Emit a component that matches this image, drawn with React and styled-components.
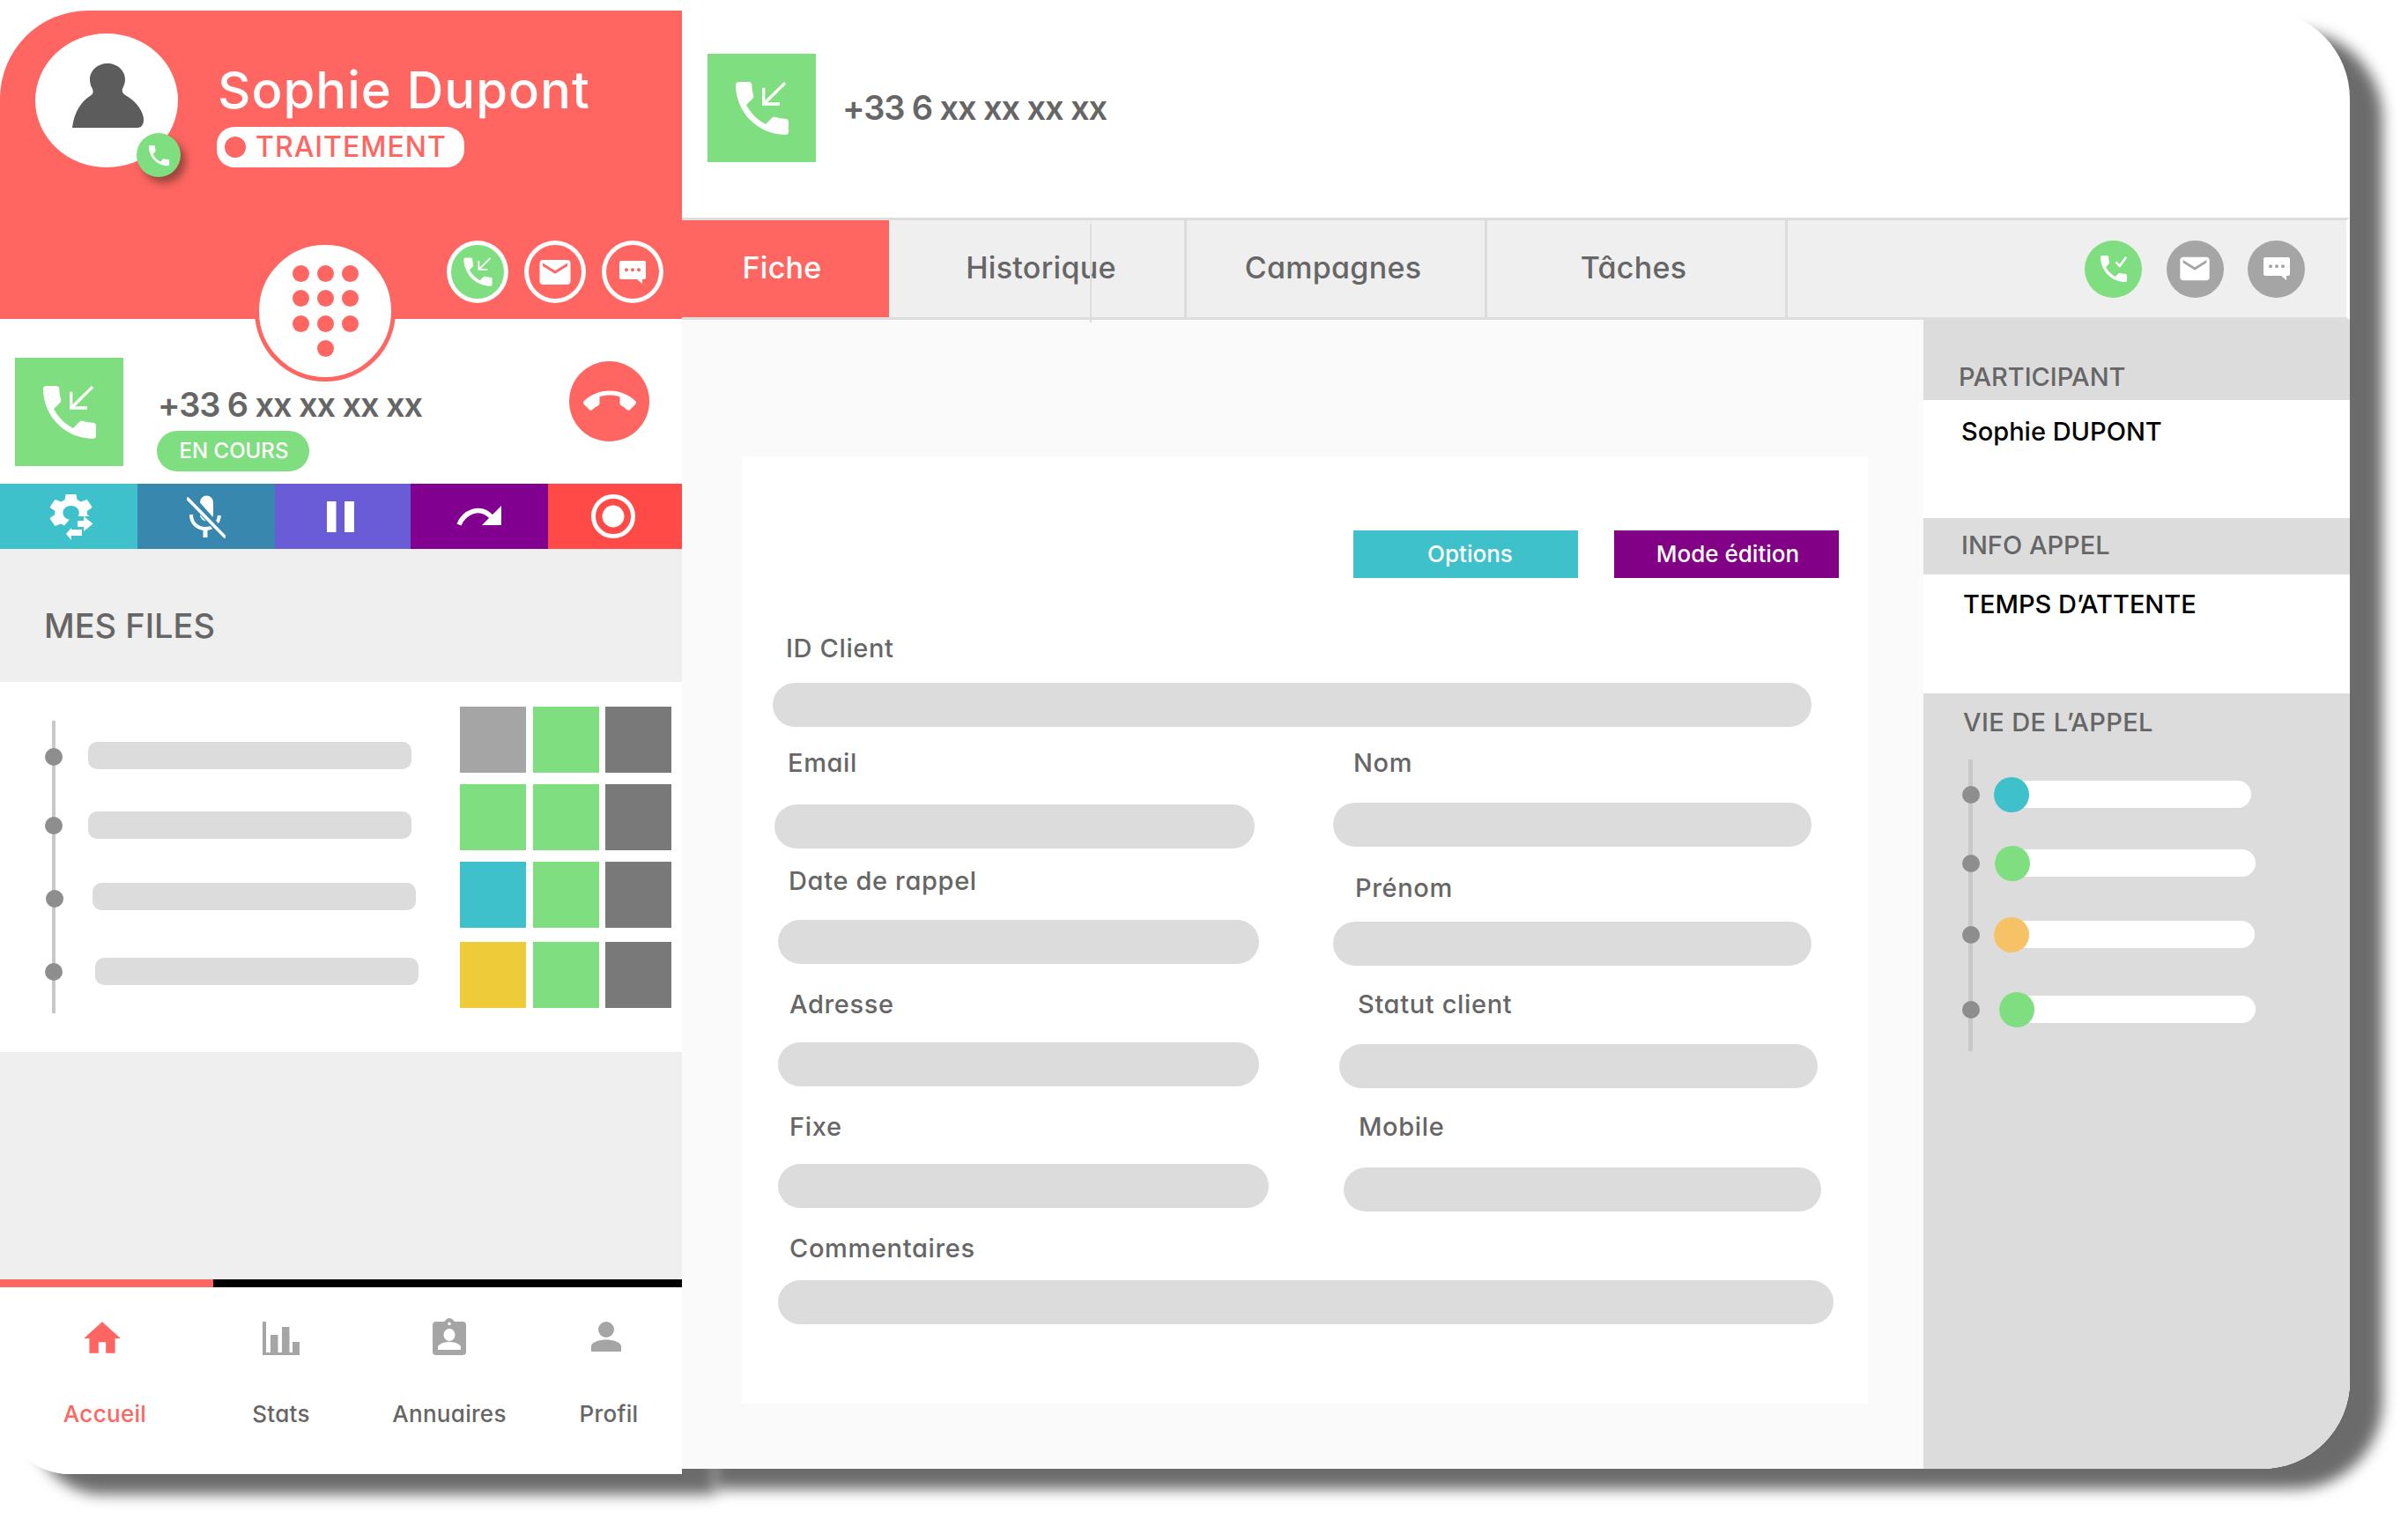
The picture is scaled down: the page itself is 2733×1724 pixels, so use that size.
import React from "react";
import styled, { createGlobalStyle } from "styled-components";
import { MdPhoneCallback, MdEmail, MdCallEnd, MdHome, MdPhone } from "react-icons/md";

const CORAL = "#ff6661";
const GREEN = "#7fde7f";
const TEAL = "#3ec1ca";
const GREY = "#a5a5a5";
const TEXT = "#666666";
const PALE = "#dcdcdc";

const Global = createGlobalStyle`
  html, body { margin: 0; padding: 0; background: #fff; }
  * { box-sizing: border-box; }
  body {
    font-family: "Inter", "Lato", "Noto Sans", sans-serif;
    font-feature-settings: "cv11" 1;
    color: ${TEXT};
  }
`;

const Page = styled.div`
  width: 2733px;
  height: 1724px;
  padding-top: 12px;
  overflow: hidden;
`;
const Frame = styled.div`
  display: flex;
  align-items: flex-start;
  width: 2667px;
`;

/* ---------- Left panel ---------- */
const Left = styled.aside`
  position: relative;
  z-index: 0;
  width: 774px;
  height: 1661px;
  flex-shrink: 0;
  display: flex;
  flex-direction: column;
  background: #fff;
  border-radius: 100px 0 0 80px;
  box-shadow: 37px 23px 16px rgba(0, 0, 0, 0.58);
  overflow: hidden;
`;
const Hero = styled.header`
  position: relative;
  height: 350px;
  flex-shrink: 0;
  padding: 26px 21px 0 40px;
  background: ${CORAL};
`;
const HeroTop = styled.div`
  display: flex;
  height: 152px;
`;
const Avatar = styled.div`
  position: relative;
  width: 162px;
  height: 152px;
  border-radius: 50%;
  background: #fff;
  display: flex;
  align-items: flex-start;
  justify-content: flex-start;
  padding: 34px 0 0 42px;
`;
const AvatarBadge = styled.div`
  position: absolute;
  left: 115px;
  top: 113px;
  width: 50px;
  height: 50px;
  border-radius: 50%;
  background: ${GREEN};
  color: #fff;
  display: flex;
  align-items: center;
  justify-content: center;
  box-shadow: 6px 7px 9px rgba(90, 50, 40, 0.6);
`;
const Identity = styled.div`
  margin: 29px 0 0 45px;
  display: flex;
  flex-direction: column;
  align-items: flex-start;
`;
const Name = styled.div`
  font-size: 58px;
  line-height: 70px;
  font-weight: 500;
  letter-spacing: 1px;
  color: #fff;
  white-space: nowrap;
`;
const StatePill = styled.div`
  margin: 7px 0 0 -1px;
  width: 281px;
  height: 46px;
  border-radius: 20px;
  background: #fff;
  color: ${CORAL};
  display: flex;
  align-items: center;
  gap: 11px;
  padding-left: 9px;
  font-size: 32px;
  font-weight: 500;
  letter-spacing: 1px;
  line-height: 46px;
  white-space: nowrap;
`;
const StateDot = styled.span`
  width: 24px;
  height: 24px;
  border-radius: 50%;
  background: ${CORAL};
  flex-shrink: 0;
`;
const HeroActions = styled.div`
  display: flex;
  justify-content: flex-end;
  gap: 18px;
  margin-top: 83px;
`;
const RingButton = styled.div`
  width: 70px;
  height: 71px;
  border-radius: 50%;
  border: 5px solid #fff;
  background: ${(p) => (p.$active ? GREEN : CORAL)};
  color: #fff;
  display: flex;
  align-items: center;
  justify-content: center;
`;
const Dial = styled.div`
  position: absolute;
  left: 289px;
  top: 261px;
  width: 160px;
  height: 160px;
  border-radius: 50%;
  background: #fff;
  border: 5px solid ${CORAL};
  display: grid;
  grid-template-columns: repeat(3, 19px);
  grid-auto-rows: 19px;
  gap: 9.5px 9px;
  justify-content: center;
  align-content: center;
`;
const DialDot = styled.span`
  width: 19px;
  height: 19px;
  border-radius: 50%;
  background: ${CORAL};
  grid-column: ${(p) => p.$col || "auto"};
`;
const CallRow = styled.section`
  height: 187px;
  flex-shrink: 0;
  display: flex;
  align-items: flex-start;
  padding: 44px 37px 0 17px;
  background: #fff;
`;
const CallSquare = styled.div`
  width: 123px;
  height: 123px;
  flex-shrink: 0;
  background: ${GREEN};
  color: #fff;
  display: flex;
  align-items: center;
  justify-content: center;
`;
const CallInfo = styled.div`
  margin: 33px 0 0 39px;
  display: flex;
  flex-direction: column;
  align-items: flex-start;
`;
const PhoneNumber = styled.div`
  font-size: 38px;
  line-height: 40px;
  font-weight: 600;
  letter-spacing: -1.1px;
  color: ${TEXT};
  white-space: nowrap;
`;
const StatusPill = styled.div`
  margin: 10px 0 0 -1px;
  width: 173px;
  height: 46px;
  border-radius: 23px;
  background: ${GREEN};
  color: #fff;
  font-size: 24px;
  font-weight: 500;
  line-height: 46px;
  padding-left: 2px;
  text-align: center;
  white-space: nowrap;
`;
const HangUp = styled.div`
  margin: 4px 0 0 auto;
  width: 91px;
  height: 91px;
  border-radius: 50%;
  background: ${CORAL};
  color: #fff;
  display: flex;
  align-items: center;
  justify-content: center;
`;
const Toolbar = styled.div`
  display: flex;
  height: 74px;
  flex-shrink: 0;
`;
const Tool = styled.div`
  width: ${(p) => p.$w}px;
  background: ${(p) => p.$bg};
  display: flex;
  align-items: center;
  justify-content: center;
  color: #fff;
  padding-left: ${(p) => p.$pl || 0}px;
  padding-right: ${(p) => p.$pr || 0}px;
`;
const QueueHead = styled.div`
  height: 151px;
  flex-shrink: 0;
  background: #efefef;
  padding: 67px 0 0 50px;
  font-size: 38px;
  line-height: 40px;
  font-weight: 500;
  color: ${TEXT};
`;
const QueueBody = styled.section`
  height: 420px;
  flex-shrink: 0;
  display: flex;
  background: #fff;
`;
const QueueList = styled.div`
  position: relative;
  width: 522px;
  padding-top: 68px;
  &::before {
    content: "";
    position: absolute;
    left: 59px;
    top: 44px;
    width: 4px;
    height: 332px;
    background: #c8c8c8;
  }
`;
const QueueRow = styled.div`
  position: relative;
  display: flex;
  align-items: center;
  height: 31px;
  margin-top: ${(p) => p.$mt}px;
  padding-left: ${(p) => p.$dotX}px;
  gap: ${(p) => p.$gap}px;
`;
const RailDot = styled.span`
  width: 20px;
  height: 20px;
  border-radius: 50%;
  background: #8e8e8e;
  flex-shrink: 0;
`;
const QueueDot = styled(RailDot)`
  margin-top: ${(p) => p.$dy}px;
`;
const QueueBar = styled.div`
  width: 367px;
  height: 31px;
  border-radius: 10px;
  background: ${PALE};
`;
const Swatches = styled.div`
  display: flex;
  flex-direction: column;
  padding-top: 28px;
`;
const SwatchRow = styled.div`
  display: flex;
  gap: 7.5px;
  margin-top: ${(p) => p.$mt}px;
`;
const Swatch = styled.div`
  width: 75px;
  height: 75px;
  background: ${(p) => p.$bg};
`;
const Filler = styled.div`
  flex: 1;
  background: #efefef;
`;
const NavProgress = styled.div`
  height: 9px;
  flex-shrink: 0;
  background: #000;
`;
const NavProgressFill = styled.div`
  width: 242px;
  height: 100%;
  background: ${CORAL};
`;
const Nav = styled.nav`
  height: 212px;
  flex-shrink: 0;
  display: flex;
  background: #fff;
  padding-top: 35px;
`;
const NavItem = styled.div`
  width: ${(p) => p.$w}px;
  display: flex;
  flex-direction: column;
  align-items: center;
  color: ${(p) => (p.$active ? CORAL : TEXT)};
`;
const NavIcon = styled.div`
  height: 42px;
  display: flex;
  align-items: ${(p) => p.$align || "flex-end"};
  justify-content: center;
  color: ${(p) => (p.$active ? CORAL : GREY)};
  margin-left: ${(p) => p.$ml || 0}px;
`;
const HomeIcon = styled(MdHome)`
  margin-bottom: -6px;
`;
const NavLabel = styled.div`
  margin-top: 52px;
  font-size: 26px;
  line-height: 30px;
  font-weight: 500;
  letter-spacing: 0.3px;
  white-space: nowrap;
`;

/* ---------- Main panel ---------- */
const Main = styled.main`
  position: relative;
  z-index: 1;
  flex: 1;
  height: 1655px;
  display: flex;
  flex-direction: column;
  background: #fff;
  border-radius: 0 100px 100px 0;
  box-shadow: 37px 23px 16px rgba(0, 0, 0, 0.58);
  overflow: hidden;
`;
const TopBar = styled.header`
  height: 235px;
  flex-shrink: 0;
  display: flex;
  align-items: flex-start;
  padding: 49px 0 0 29px;
  gap: 30px;
`;
const TopNumber = styled(PhoneNumber)`
  margin-top: 41px;
`;
const Tabs = styled.div`
  position: relative;
  height: 116px;
  flex-shrink: 0;
  display: flex;
  align-items: stretch;
  background: #efefef;
  border-top: 3px solid #ddd;
  border-bottom: 3px solid #ddd;
  border-right: 4px solid #fff;
`;
const Tab = styled.div`
  position: relative;
  width: ${(p) => p.$w}px;
  display: flex;
  align-items: center;
  justify-content: center;
  padding: 0 ${(p) => p.$pr || 0}px 3px ${(p) => p.$pl || 0}px;
  font-size: 34px;
  font-weight: 500;
  letter-spacing: 0.3px;
  white-space: nowrap;
  color: ${(p) => (p.$active ? "#fff" : TEXT)};
  background: ${(p) => (p.$active ? CORAL : "transparent")};
  border-right: ${(p) => (p.$sep ? "3px solid #ddd" : "none")};
`;
const TabGuide = styled.span`
  position: absolute;
  left: 228px;
  top: 4px;
  width: 2px;
  height: 112px;
  background: #ddd;
`;
const TabActions = styled.div`
  margin-left: auto;
  display: flex;
  align-items: center;
  gap: 27.5px;
  padding-right: 47px;
`;
const RoundButton = styled.div`
  width: 65px;
  height: 65px;
  border-radius: 50%;
  background: ${(p) => (p.$active ? GREEN : GREY)};
  color: #fff;
  display: flex;
  align-items: center;
  justify-content: center;
`;
const Content = styled.div`
  flex: 1;
  display: flex;
  min-height: 0;
`;
const Work = styled.div`
  flex: 1;
  background: #fafafa;
  padding: 155px 0 0 68px;
`;
const Card = styled.section`
  width: 1278px;
  height: 1075px;
  background: #fff;
  padding-top: 84px;
`;
const CardButtons = styled.div`
  display: flex;
  justify-content: flex-end;
  gap: 41px;
  padding-right: 33px;
  margin-bottom: 65px;
`;
const CardButton = styled.div`
  width: 255px;
  height: 54px;
  padding-left: ${(p) => p.$pl || 0}px;
  background: ${(p) => p.$bg};
  color: #fff;
  font-size: 26px;
  font-weight: 500;
  line-height: 54px;
  text-align: center;
`;
const FormRow = styled.div`
  display: flex;
  align-items: flex-start;
  height: ${(p) => p.$h}px;
`;
const Field = styled.div`
  width: ${(p) => p.$w}px;
  margin-left: ${(p) => p.$ml}px;
  margin-top: ${(p) => p.$top || 0}px;
  flex-shrink: 0;
`;
const FieldLabel = styled.div`
  height: 30px;
  padding-left: ${(p) => p.$pad}px;
  font-size: 29px;
  line-height: 30px;
  font-weight: 500;
  letter-spacing: 0.65px;
  color: ${TEXT};
  white-space: nowrap;
`;
const FieldBar = styled.div`
  height: 50px;
  margin-top: ${(p) => p.$mt}px;
  border-radius: 25px;
  background: ${PALE};
`;

/* ---------- Sidebar ---------- */
const Side = styled.aside`
  width: 484px;
  flex-shrink: 0;
  display: flex;
  flex-direction: column;
  background: #fff;
`;
const SideHead = styled.div`
  height: ${(p) => p.$h}px;
  padding: ${(p) => p.$pt}px 0 0 ${(p) => p.$pl}px;
  background: ${PALE};
  font-size: 29px;
  line-height: 30px;
  font-weight: 500;
  color: ${TEXT};
  white-space: nowrap;
`;
const SideBody = styled.div`
  height: ${(p) => p.$h}px;
  padding: ${(p) => p.$pt}px 0 0 ${(p) => p.$pl}px;
  font-size: 29px;
  line-height: 30px;
  font-weight: 500;
  color: #000;
  white-space: nowrap;
`;
const Life = styled.div`
  flex: 1;
  background: ${PALE};
  padding: 18px 0 0 45px;
`;
const LifeTitle = styled.div`
  font-size: 29px;
  line-height: 30px;
  font-weight: 500;
  letter-spacing: 0.4px;
  color: ${TEXT};
  white-space: nowrap;
`;
const LifeList = styled.div`
  position: relative;
  margin-top: 7px;
  padding-top: 44px;
  &::before {
    content: "";
    position: absolute;
    left: 6px;
    top: 20px;
    width: 5px;
    height: 331px;
    background: #c8c8c8;
  }
`;
const LifeRow = styled.div`
  position: relative;
  display: flex;
  align-items: center;
  height: 31px;
  margin-top: ${(p) => p.$mt}px;
`;
const LifeDot = styled(RailDot)`
  margin-left: ${(p) => p.$dx || -1}px;
`;
const LifeTrack = styled.div`
  margin-left: ${(p) => p.$gap}px;
  width: ${(p) => p.$w}px;
  height: 31px;
  border-radius: 16px;
  background: #fff;
  display: flex;
  align-items: center;
`;
const LifeKnob = styled.span`
  width: 40px;
  height: 40px;
  border-radius: 50%;
  background: ${(p) => p.$bg};
  flex-shrink: 0;
`;

/* ---------- Drawings ---------- */
const PersonGlyph = () => (
  <svg width="81" height="74" viewBox="0 0 81 74" fill="#5c5c5c">
    <path d="M40 0C51 0 60 8 60 18C60 23 58 26 57 29C56 32 58 35 62 37C72 43 81 54 81 64C81 70 78 73 74 73L0 73C2 54 12 42 20 37C24 35 24 32 23 29C21 26 20 22 20 18C20 8 29 0 40 0Z" />
  </svg>
);
const ChatGlyph = ({ w = 30 }) => (
  <svg width={w} height={(w * 26) / 30} viewBox="0 0 30 26" fill="currentColor" fillRule="evenodd">
    <path d="M2 0H28a2 2 0 0 1 2 2V19a2 2 0 0 1-2 2H26V26L20 21H2a2 2 0 0 1-2-2V2a2 2 0 0 1 2-2Z M8 8.2a2 2 0 1 0 .01 0Z M15 8.2a2 2 0 1 0 .01 0Z M22 8.2a2 2 0 1 0 .01 0Z" />
  </svg>
);
const PhoneCheckGlyph = () => (
  <svg width="40" height="40" viewBox="0 0 24 24" fill="none">
    <path fill="currentColor" d="M20 15.5c-1.25 0-2.45-.2-3.57-.57-.35-.11-.74-.03-1.02.24l-2.2 2.2c-2.83-1.44-5.15-3.75-6.59-6.59l2.2-2.21c.28-.26.36-.65.25-1C8.7 6.45 8.5 5.25 8.5 4c0-.55-.45-1-1-1H4c-.55 0-1 .45-1 1 0 9.39 7.61 17 17 17 .55 0 1-.45 1-1v-3.5c0-.55-.45-1-1-1z" />
    <path stroke="currentColor" strokeWidth="1.5" d="M13.5 7.5l2.6 2.6L20.5 4" />
  </svg>
);
const GearGlyph = () => (
  <svg width="50" height="53" viewBox="0 0 50 53">
    <g transform="translate(-6 -4.4) scale(2.55 2.2)">
      <path fill="#fff" d="M19.14 12.94c.04-.3.06-.61.06-.94 0-.32-.02-.64-.07-.94l2.03-1.58c.18-.14.23-.41.12-.61l-1.92-3.32c-.12-.22-.37-.29-.59-.22l-2.39.96c-.5-.38-1.03-.7-1.62-.94l-.36-2.54c-.04-.24-.24-.41-.48-.41h-3.84c-.24 0-.43.17-.47.41l-.36 2.54c-.59.24-1.13.57-1.62.94l-2.39-.96c-.22-.08-.47 0-.59.22L2.74 8.87c-.12.21-.08.47.12.61l2.03 1.58c-.05.3-.09.63-.09.94s.02.64.07.94l-2.03 1.58c-.18.14-.23.41-.12.61l1.92 3.32c.12.22.37.29.59.22l2.39-.96c.5.38 1.03.7 1.62.94l.36 2.54c.05.24.24.41.48.41h3.84c.24 0 .44-.17.47-.41l.36-2.54c.59-.24 1.13-.56 1.62-.94l2.39.96c.22.08.47 0 .59-.22l1.92-3.32c.12-.22.07-.47-.12-.61l-2.01-1.58zM12 15.6c-1.98 0-3.6-1.62-3.6-3.6s1.62-3.6 3.6-3.6 3.6 1.62 3.6 3.6-1.62 3.6-3.6 3.6z" />
    </g>
    <path fill={TEAL} d="M26 26h24v27H14V40z" />
    <path fill="#fff" d="M32 31h7v-5l10.5 8.5L39 43v-5h-7zM37 41v7h-12v5L19 46l6-7v2z" />
  </svg>
);
const MicOffGlyph = () => (
  <svg width="44" height="49" viewBox="0 0 44 49" fill="none">
    <rect x="15" y="0.5" width="15" height="29" rx="7.5" fill="#fff" />
    <path d="M5 22c0 10 7 16 16 16s15-6 16-15" stroke="#fff" strokeWidth="4" />
    <path d="M21 36v12" stroke="#fff" strokeWidth="5" />
    <path d="M-2 -4L44 48" stroke="#3887ae" strokeWidth="9" />
    <path d="M1 4L43 47" stroke="#fff" strokeWidth="3.5" strokeLinecap="round" />
  </svg>
);
const PauseGlyph = () => (
  <svg width="31" height="35" viewBox="0 0 31 35" fill="#fff">
    <rect width="10.5" height="35" />
    <rect x="20" width="11" height="35" />
  </svg>
);
const ForwardGlyph = () => (
  <svg width="52" height="24" viewBox="0 0 52 24">
    <path d="M3 21.5C8 9 26 -3 41 14" stroke="#fff" strokeWidth="5.5" fill="none" />
    <path d="M51 0v22H29z" fill="#fff" />
  </svg>
);
const RecordGlyph = () => (
  <svg width="50" height="50" viewBox="0 0 50 50" fill="none">
    <circle cx="25" cy="25" r="22.5" stroke="#fff" strokeWidth="5" />
    <circle cx="25" cy="25" r="12.5" fill="#fff" />
  </svg>
);
const StatsGlyph = () => (
  <svg width="42" height="38" viewBox="0 0 42 38" fill="currentColor">
    <rect width="4" height="38" />
    <rect y="35" width="42" height="3" />
    <rect x="9" y="15" width="8.5" height="23" />
    <rect x="22" y="6" width="8.5" height="32" />
    <rect x="34" y="23" width="8" height="15" />
  </svg>
);
const BadgeGlyph = () => (
  <svg width="38" height="42" viewBox="0 0 38 42" fillRule="evenodd" fill="currentColor">
    <path d="M4 4H13L16 1Q19 -1 22 1L25 4H34a4 4 0 0 1 4 4V38a4 4 0 0 1-4 4H4a4 4 0 0 1-4-4V8a4 4 0 0 1 4-4Z M19 4.5a1.8 1.8 0 1 0 .01 0Z M19 12a6.5 7 0 1 0 .01 0Z M6 36V33C6 30 12 27 19 27S32 30 32 33V36Z" />
  </svg>
);
const UserGlyph = () => (
  <svg width="34" height="34" viewBox="0 0 34 34" fill="currentColor">
    <ellipse cx="17" cy="9" rx="9" ry="9" />
    <path d="M0 34V28C0 24 8 20.5 17 20.5S34 24 34 28V34Z" />
  </svg>
);

const QUEUE = [
  { mt: 0, dotX: 51, gap: 29, dy: 3 },
  { mt: 48, dotX: 51, gap: 29, dy: 1 },
  { mt: 50, dotX: 52, gap: 33, dy: 5 },
  { mt: 54, dotX: 51, gap: 37, dy: 1 },
];
const SWATCHES = [
  { mt: 0, first: GREY },
  { mt: 13, first: GREEN },
  { mt: 13, first: TEAL },
  { mt: 16, first: "#eecb38" },
];
const TOOLS = [
  { bg: TEAL, w: 156, pl: 6, icon: <GearGlyph /> },
  { bg: "#3887ae", w: 156, icon: <MicOffGlyph /> },
  { bg: "#6a5cd6", w: 154, pr: 6, icon: <PauseGlyph /> },
  { bg: "#810090", w: 156, icon: <ForwardGlyph /> },
  { bg: "#ff4a47", w: 152, pr: 4, icon: <RecordGlyph /> },
];
const FORM = [
  { h: 130, fields: [{ label: "ID Client", w: 1179, ml: 35, pad: 15, mt: 24 }] },
  {
    h: 134,
    fields: [
      { label: "Email", w: 545, ml: 37, pad: 15, mt: 32 },
      { label: "Nom", w: 543, ml: 89, pad: 23, mt: 30 },
    ],
  },
  {
    h: 140,
    fields: [
      { label: "Date de rappel", w: 546, ml: 41, pad: 12, mt: 29 },
      { label: "Prénom", w: 543, ml: 84, pad: 25, mt: 23, top: 8 },
    ],
  },
  {
    h: 139,
    fields: [
      { label: "Adresse", w: 546, ml: 41, pad: 13, mt: 28 },
      { label: "Statut client", w: 543, ml: 91, pad: 21, mt: 30 },
    ],
  },
  {
    h: 138,
    fields: [
      { label: "Fixe", w: 557, ml: 41, pad: 13, mt: 27 },
      { label: "Mobile", w: 542, ml: 85, pad: 17, mt: 31 },
    ],
  },
  { h: 80, fields: [{ label: "Commentaires", w: 1198, ml: 41, pad: 13, mt: 21 }] },
];
const LIFE = [
  { mt: 0, dx: -1, gap: 16, w: 292, bg: TEAL },
  { mt: 47, dx: -1, gap: 17, w: 296, bg: GREEN },
  { mt: 50, dx: 0, gap: 16, w: 296, bg: "#f7c265" },
  { mt: 54, dx: -1, gap: 22, w: 291, bg: GREEN },
];

export default function App() {
  return (
    <Page>
      <Global />
      <Frame>
        <Left>
          <Hero>
            <HeroTop>
              <Avatar>
                <PersonGlyph />
                <AvatarBadge>
                  <MdPhone size={31} />
                </AvatarBadge>
              </Avatar>
              <Identity>
                <Name>Sophie Dupont</Name>
                <StatePill>
                  <StateDot />
                  TRAITEMENT
                </StatePill>
              </Identity>
            </HeroTop>
            <HeroActions>
              <RingButton $active>
                <MdPhoneCallback size={43} />
              </RingButton>
              <RingButton>
                <MdEmail size={42} />
              </RingButton>
              <RingButton>
                <ChatGlyph />
              </RingButton>
            </HeroActions>
            <Dial>
              {Array.from({ length: 9 }, (_, i) => (
                <DialDot key={i} />
              ))}
              <DialDot $col="2" />
            </Dial>
          </Hero>
          <CallRow>
            <CallSquare>
              <MdPhoneCallback size={80} />
            </CallSquare>
            <CallInfo>
              <PhoneNumber>+33 6 xx xx xx xx</PhoneNumber>
              <StatusPill>EN COURS</StatusPill>
            </CallInfo>
            <HangUp>
              <MdCallEnd size={60} />
            </HangUp>
          </CallRow>
          <Toolbar>
            {TOOLS.map((t) => (
              <Tool key={t.bg} $bg={t.bg} $w={t.w} $pl={t.pl} $pr={t.pr}>
                {t.icon}
              </Tool>
            ))}
          </Toolbar>
          <QueueHead>MES FILES</QueueHead>
          <QueueBody>
            <QueueList>
              {QUEUE.map((q, i) => (
                <QueueRow key={i} $mt={q.mt} $dotX={q.dotX} $gap={q.gap}>
                  <QueueDot $dy={q.dy} />
                  <QueueBar />
                </QueueRow>
              ))}
            </QueueList>
            <Swatches>
              {SWATCHES.map((s, i) => (
                <SwatchRow key={i} $mt={s.mt}>
                  <Swatch $bg={s.first} />
                  <Swatch $bg={GREEN} />
                  <Swatch $bg="#797979" />
                </SwatchRow>
              ))}
            </Swatches>
          </QueueBody>
          <Filler />
          <NavProgress>
            <NavProgressFill />
          </NavProgress>
          <Nav>
            <NavItem $w={238} $active>
              <NavIcon $active $ml={-6}>
                <HomeIcon size={50} />
              </NavIcon>
              <NavLabel>Accueil</NavLabel>
            </NavItem>
            <NavItem $w={162}>
              <NavIcon>
                <StatsGlyph />
              </NavIcon>
              <NavLabel>Stats</NavLabel>
            </NavItem>
            <NavItem $w={220}>
              <NavIcon>
                <BadgeGlyph />
              </NavIcon>
              <NavLabel>Annuaires</NavLabel>
            </NavItem>
            <NavItem $w={142}>
              <NavIcon $align="center" $ml={-6}>
                <UserGlyph />
              </NavIcon>
              <NavLabel>Profil</NavLabel>
            </NavItem>
          </Nav>
        </Left>
        <Main>
          <TopBar>
            <CallSquare>
              <MdPhoneCallback size={80} />
            </CallSquare>
            <TopNumber>+33 6 xx xx xx xx</TopNumber>
          </TopBar>
          <Tabs>
            <Tab $active $w={235} $pr={8}>
              Fiche
            </Tab>
            <Tab $w={338} $sep $pl={10}>
              Historique
              <TabGuide />
            </Tab>
            <Tab $w={341} $sep $pr={6}>
              Campagnes
            </Tab>
            <Tab $w={341} $sep $pr={6}>
              Tâches
            </Tab>
            <TabActions>
              <RoundButton $active>
                <PhoneCheckGlyph />
              </RoundButton>
              <RoundButton>
                <MdEmail size={40} />
              </RoundButton>
              <RoundButton>
                <ChatGlyph />
              </RoundButton>
            </TabActions>
          </Tabs>
          <Content>
            <Work>
              <Card>
                <CardButtons>
                  <CardButton $bg={TEAL} $pl={10}>
                    Options
                  </CardButton>
                  <CardButton $bg="#810086" $pl={3}>
                    Mode édition
                  </CardButton>
                </CardButtons>
                {FORM.map((row, i) => (
                  <FormRow key={i} $h={row.h}>
                    {row.fields.map((f) => (
                      <Field key={f.label} $w={f.w} $ml={f.ml} $top={f.top}>
                        <FieldLabel $pad={f.pad}>{f.label}</FieldLabel>
                        <FieldBar $mt={f.mt} />
                      </Field>
                    ))}
                  </FormRow>
                ))}
              </Card>
            </Work>
            <Side>
              <SideHead $h={91} $pt={50} $pl={40}>
                PARTICIPANT
              </SideHead>
              <SideBody $h={134} $pt={21} $pl={43}>
                Sophie DUPONT
              </SideBody>
              <SideHead $h={64} $pt={16} $pl={43}>
                INFO APPEL
              </SideHead>
              <SideBody $h={135} $pt={19} $pl={45}>
                TEMPS D’ATTENTE
              </SideBody>
              <Life>
                <LifeTitle>VIE DE L’APPEL</LifeTitle>
                <LifeList>
                  {LIFE.map((l, i) => (
                    <LifeRow key={i} $mt={l.mt}>
                      <LifeDot $dx={l.dx} />
                      <LifeTrack $gap={l.gap} $w={l.w}>
                        <LifeKnob $bg={l.bg} />
                      </LifeTrack>
                    </LifeRow>
                  ))}
                </LifeList>
              </Life>
            </Side>
          </Content>
        </Main>
      </Frame>
    </Page>
  );
}
